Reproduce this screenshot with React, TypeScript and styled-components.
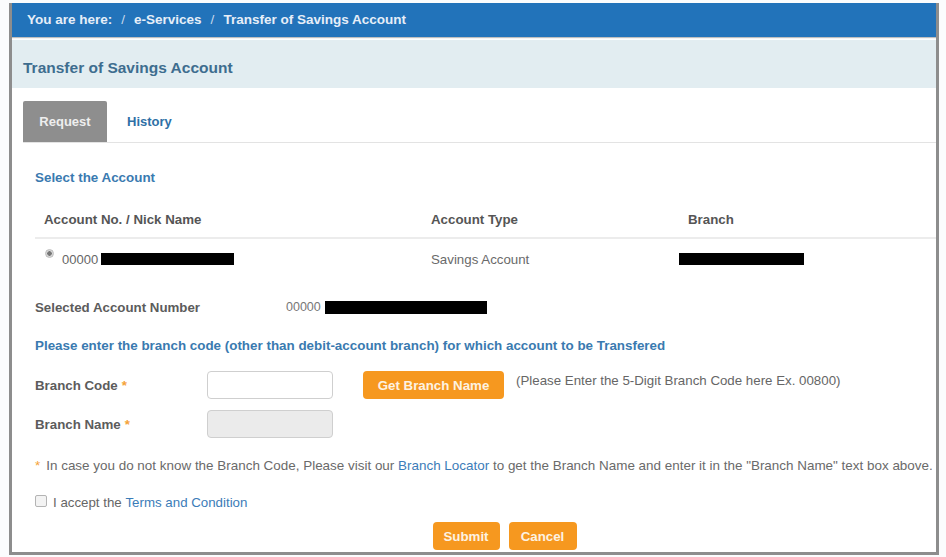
import React from "react";
import styled, { createGlobalStyle } from "styled-components";

const Global = createGlobalStyle`
  html, body { margin: 0; padding: 0; background: #ffffff; }
  body { font-family: "Liberation Sans", Arial, sans-serif; font-size: 13.3px; color: #555; }
  * { box-sizing: border-box; }
`;

const Page = styled.div`
  width: 946px;
  height: 557px;
  padding: 3px 7px 2px 9px;
  background: #fbfcfd;
`;

const Frame = styled.div`
  height: 552px;
  border: 3px solid #8d8d8d;
  border-top: none;
  background: #ffffff;
  display: flex;
  flex-direction: column;
  overflow: hidden;
  & > * { flex-shrink: 0; }
`;

const Breadcrumb = styled.div`
  height: 34px;
  background: #2273ba;
  display: flex;
  align-items: center;
  padding: 0 0 2px 15px;
  gap: 9px;
  color: #e6eef8;
  font-weight: bold;
  font-size: 13.5px;
  box-shadow: 0 1px 1px rgba(0, 0, 0, 0.25);
`;

const Sep = styled.span`
  color: #c9d9ec;
  font-weight: normal;
`;

const TitleBand = styled.div`
  margin-top: 3px;
  height: 48px;
  background: #e2edf1;
  padding: 19px 0 0 11px;
  color: #3e6d8f;
  font-weight: bold;
  font-size: 15.5px;
  line-height: 18px;
`;

const Body = styled.div`
  padding: 13px 0 0 11px;
  display: flex;
  flex-direction: column;
`;

const Tabs = styled.div`
  display: flex;
  align-items: stretch;
  height: 42px;
  border-bottom: 1px solid #e3e3e3;
`;

const Tab = styled.div<{ $active?: boolean }>`
  display: flex;
  align-items: center;
  justify-content: center;
  padding: 0 ${(p) => (p.$active ? "17px" : "20px")};
  width: ${(p) => (p.$active ? "84px" : "auto")};
  background: ${(p) => (p.$active ? "#8e8e8e" : "transparent")};
  color: ${(p) => (p.$active ? "#eeeeee" : "#2f70a6")};
  font-weight: bold;
  font-size: 13px;
  border-radius: 2px 2px 0 0;
`;

const Content = styled.div`
  padding: 0 0 0 12px;
  display: flex;
  flex-direction: column;
`;

const SectionTitle = styled.div<{ $top: number }>`
  margin-top: ${(p) => p.$top}px;
  color: #3a7ab0;
  font-weight: bold;
  font-size: 13.4px;
  line-height: 16px;
  white-space: nowrap;
`;

const Table = styled.div`
  margin-top: 15px;
  display: flex;
  flex-direction: column;
`;

const Row = styled.div<{ $head?: boolean }>`
  display: grid;
  grid-template-columns: 387px 257px 1fr;
  align-items: center;
  height: ${(p) => (p.$head ? "38px" : "40px")};
  border-bottom: ${(p) => (p.$head ? "2px solid #ececec" : "none")};
`;

const Cell = styled.div<{ $head?: boolean }>`
  padding-left: 9px;
  display: flex;
  align-items: center;
  font-weight: ${(p) => (p.$head ? "bold" : "normal")};
  color: ${(p) => (p.$head ? "#555" : "#6a6a6a")};
  white-space: nowrap;
`;

const Radio = styled.span`
  width: 9px;
  height: 9px;
  border-radius: 50%;
  background: radial-gradient(circle at 50% 50%, #777 0 2px, #d8d8d8 2.5px);
  border: 1px solid #bdbdbd;
  margin: -3px 8px 0 1px;
  align-self: flex-start;
`;

const AcctNo = styled.span`
  font-size: 13px;
  color: #666;
  margin-right: 3px;
`;

const Redact = styled.span<{ $w: number; $h?: number }>`
  display: inline-block;
  width: ${(p) => p.$w}px;
  height: ${(p) => p.$h ?? 12}px;
  background: #000;
`;

const InfoRow = styled.div`
  margin-top: 19px;
  display: grid;
  grid-template-columns: 251px 1fr;
  align-items: center;
  height: 18px;
`;

const Label = styled.div`
  font-weight: bold;
  color: #5c5c5c;
`;

const Value = styled.div`
  display: flex;
  align-items: center;
  color: #777;
  font-size: 12.5px;
  gap: 4px;
`;

const FormRow = styled.div<{ $top: number }>`
  margin-top: ${(p) => p.$top}px;
  display: flex;
  align-items: center;
  height: 28px;
`;

const FieldLabel = styled.div`
  width: 172px;
  font-weight: bold;
  color: #5c5c5c;
`;

const Star = styled.span`
  color: #f5a33a;
  margin-left: 4px;
`;

const Input = styled.input<{ $disabled?: boolean }>`
  width: 126px;
  height: 28px;
  border: 1px solid #cfcfcf;
  border-radius: 4px;
  background: ${(p) => (p.$disabled ? "#ebebeb" : "#fff")};
  outline: none;
`;

const OrangeButton = styled.button<{ $w: number }>`
  width: ${(p) => p.$w}px;
  height: 28px;
  background: #f6981f;
  border: none;
  border-radius: 4px;
  color: #fdf2e2;
  font-family: "Liberation Sans", Arial, sans-serif;
  font-weight: bold;
  font-size: 13.3px;
  padding: 0;
`;

const Hint = styled.div`
  margin-left: 12px;
  color: #666;
  align-self: flex-start;
  margin-top: 2px;
`;

const Note = styled.div`
  margin-top: 20px;
  color: #6a6a6a;
  font-size: 13.45px;
  line-height: 16px;
  white-space: nowrap;
`;

const Link = styled.a`
  color: #3b7cb8;
  text-decoration: none;
`;

const Accept = styled.div`
  margin-top: 20px;
  display: flex;
  align-items: center;
  color: #666;
  height: 16px;
`;

const Check = styled.span`
  width: 12px;
  height: 12px;
  border: 1px solid #b4b4b4;
  border-radius: 2px;
  background: #f3f3f3;
  margin-right: 6px;
  margin-top: -2px;
`;

const Actions = styled.div`
  margin-top: 12px;
  display: flex;
  justify-content: center;
  gap: 9px;
  padding-left: 38px;
`;

export default function App() {
  return (
    <>
      <Global />
      <Page>
        <Frame>
          <Breadcrumb>
            <span>You are here:</span>
            <Sep>/</Sep>
            <span>e-Services</span>
            <Sep>/</Sep>
            <span>Transfer of Savings Account</span>
          </Breadcrumb>
          <TitleBand>Transfer of Savings Account</TitleBand>
          <Body>
            <Tabs>
              <Tab $active>Request</Tab>
              <Tab>History</Tab>
            </Tabs>
            <Content>
              <SectionTitle $top={27}>Select the Account</SectionTitle>
              <Table>
                <Row $head>
                  <Cell $head>Account No. / Nick Name</Cell>
                  <Cell $head>Account Type</Cell>
                  <Cell $head>Branch</Cell>
                </Row>
                <Row>
                  <Cell>
                    <Radio />
                    <AcctNo>00000</AcctNo>
                    <Redact $w={133} />
                  </Cell>
                  <Cell>Savings Account</Cell>
                  <Cell style={{ paddingLeft: 0 }}>
                    <Redact $w={125} />
                  </Cell>
                </Row>
              </Table>
              <InfoRow>
                <Label>Selected Account Number</Label>
                <Value>
                  00000
                  <Redact $w={162} $h={13} />
                </Value>
              </InfoRow>
              <SectionTitle $top={22}>
                Please enter the branch code (other than debit-account branch) for which account to be Transfered
              </SectionTitle>
              <FormRow $top={17}>
                <FieldLabel>
                  Branch Code<Star>*</Star>
                </FieldLabel>
                <Input />
                <OrangeButton $w={141} style={{ marginLeft: 30 }}>
                  Get Branch Name
                </OrangeButton>
                <Hint>(Please Enter the 5-Digit Branch Code here Ex. 00800)</Hint>
              </FormRow>
              <FormRow $top={11}>
                <FieldLabel>
                  Branch Name<Star>*</Star>
                </FieldLabel>
                <Input $disabled disabled />
              </FormRow>
              <Note>
                <Star style={{ marginLeft: 0, marginRight: 6 }}>*</Star>
                In case you do not know the Branch Code, Please visit our <Link>Branch Locator</Link> to get the
                Branch Name and enter it in the "Branch Name" text box above.
              </Note>
              <Accept>
                <Check />
                I accept the&nbsp;<Link>Terms and Condition</Link>
              </Accept>
              <Actions>
                <OrangeButton $w={67}>Submit</OrangeButton>
                <OrangeButton $w={68}>Cancel</OrangeButton>
              </Actions>
            </Content>
          </Body>
        </Frame>
      </Page>
    </>
  );
}
